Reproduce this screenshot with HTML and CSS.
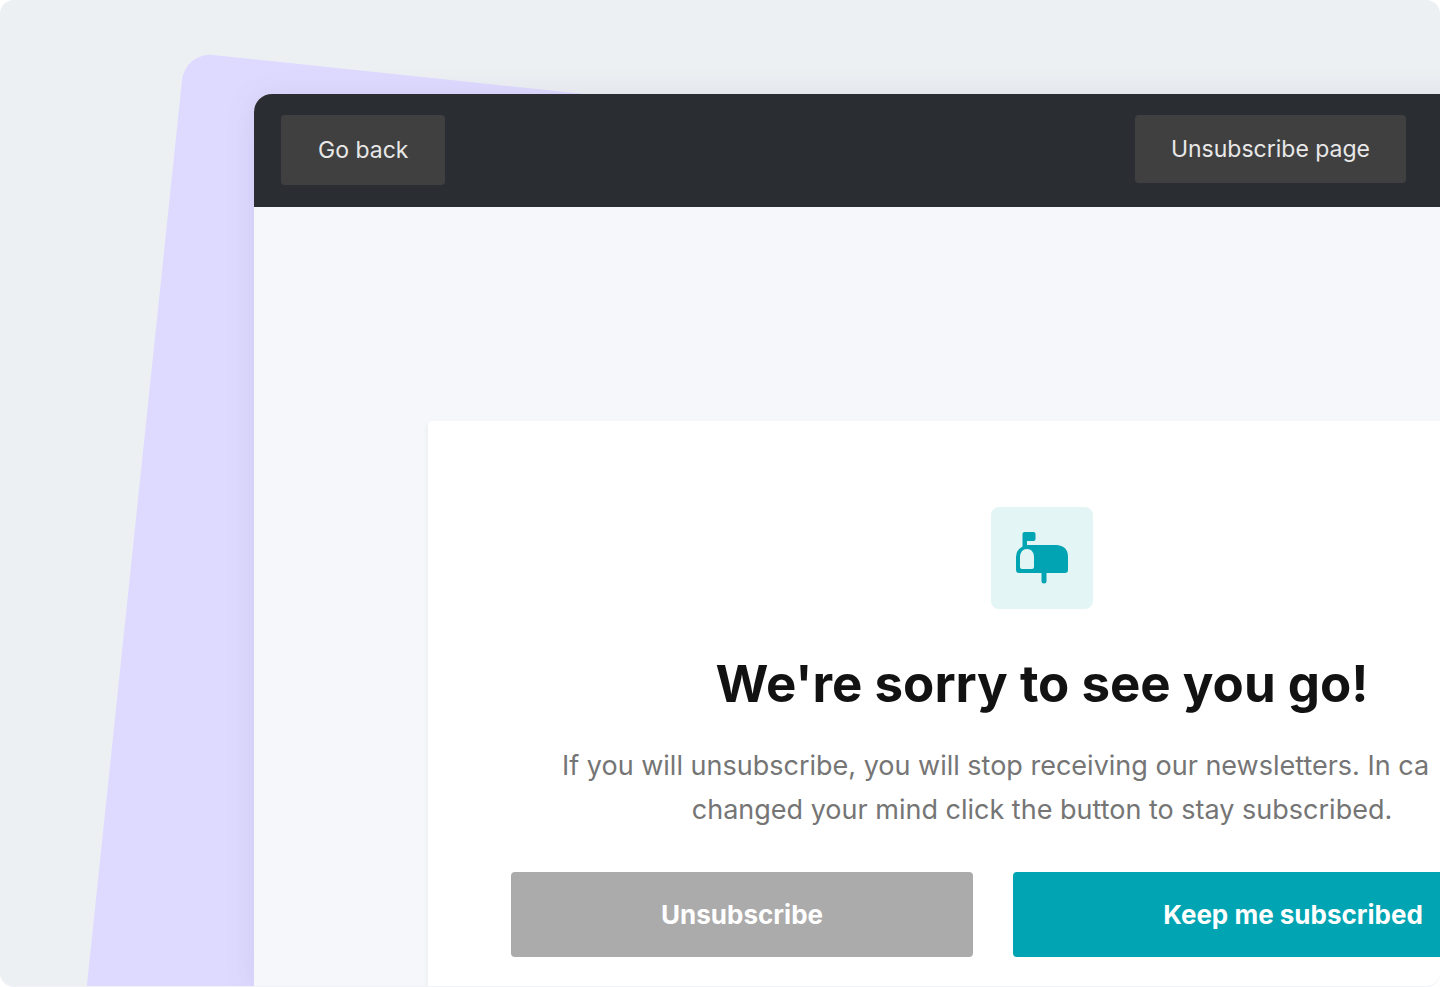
FILE: index.html
```html
<!DOCTYPE html>
<html lang="en">
<head>
    <meta charset="UTF-8">
    <meta name="viewport" content="width=device-width, initial-scale=1.0">
    <title>Unsubscribe page</title>
    <link rel="stylesheet" href="styles.css">
</head>
<body>
    <div class="stage">
        <div class="sheet"></div>
        <div class="window">
            <header class="topbar">
                <button type="button" class="bar-button">Go back</button>
                <button type="button" class="bar-button page-button">Unsubscribe page</button>
            </header>
            <main class="content">
                <section class="card">
                    <div class="icon">
                        <svg width="54" height="54" viewBox="0 0 54 54" aria-hidden="true">
                            <path fill="#00a4b2" fill-rule="evenodd" d="M7.5 3 Q7.5 1 9.500 1 H18.500 Q20.500 1 20.500 3 V8 Q20.500 10 18.500 10 H12 V14 H42 Q53 15 53 26 V39 Q53 42 50 42 H31.500 V50 Q31.500 52.500 29 52.500 Q26.500 52.500 26.500 50 V42 H4 Q1 42 1 39 V26 Q1 19 7.500 15.500 Z M5 36 Q5 38 7 38 H17 Q19 38 19 36 V26 Q18.500 18 12 18 Q5.500 18 5 26 Z"/>
                        </svg>
                    </div>
                    <h1>We're sorry to see you go!</h1>
                    <p class="message"><span class="first-line">If you will unsubscribe, you will stop receiving our newsletters. In ca</span> changed your mind click the button to stay subscribed.</p>
                    <div class="actions">
                        <button type="button" class="action">Unsubscribe</button>
                        <button type="button" class="action keep">Keep me subscribed</button>
                    </div>
                </section>
            </main>
        </div>
    </div>
</body>
</html>
```
FILE: styles.css
```css
* {
    box-sizing: border-box;
}
body {
    margin: 0;
    background-color: #fff;
    font-family: Inter, "Liberation Sans", sans-serif;
}
button {
    border: none;
    font-family: inherit;
    cursor: pointer;
}
.stage {
    position: relative;
    display: flex;
    height: 100vh;
    padding: 94px 0 0 254px;
    overflow: hidden;
    border-radius: 14px;
    border-bottom: 1px solid #f1f1f8;
    background-color: #ecf0f3;
}
/* tilted sheet behind the window */
.sheet {
    position: absolute;
    top: 52px;
    left: 185px;
    width: 100%;
    height: 120%;
    border-radius: 28px;
    background-color: #dedaff;
    transform: rotate(6deg);
    transform-origin: top left;
}
/* the window runs off the right side of the stage */
.window {
    position: relative;
    display: flex;
    flex-direction: column;
    flex: 1;
    margin-right: -390px;
    border-radius: 18px 18px 0 0;
    background-color: #f6f7fa;
    box-shadow: 0 4px 32px rgba(60, 50, 110, 0.1);
}
.topbar {
    display: flex;
    justify-content: space-between;
    align-items: flex-start;
    padding: 21px 424px 22px 27px;
    border-radius: 18px 18px 0 0;
    background-color: #2a2d32;
}
.bar-button {
    padding: 0 37px;
    border-radius: 4px;
    background-color: #404040;
    color: #e8e8e8;
    font-size: 23px;
    line-height: 70px;
}
.page-button {
    padding: 0 36px;
    line-height: 68px;
}
.content {
    flex: 1;
    padding: 214px 174px 0;
}
.card {
    display: flex;
    flex-direction: column;
    align-items: center;
    min-height: 640px;
    padding: 86px 83px 30px;
    border-radius: 4px;
    background-color: #fff;
    box-shadow: 0 4px 6px rgba(40, 60, 60, 0.08);
}
.icon {
    display: flex;
    justify-content: center;
    align-items: center;
    width: 102px;
    height: 102px;
    border-radius: 8px;
    background-color: #e4f5f6;
}
h1 {
    margin: 44px 0 29px;
    color: #121212;
    font-size: 51px;
    line-height: 62px;
}
.message {
    width: 960px;
    max-width: 100%;
    margin: 0 0 40px;
    color: #757575;
    font-size: 27px;
    line-height: 44px;
    text-align: center;
}
.first-line {
    display: block;
    text-align: left;
}
.actions {
    display: flex;
    gap: 40px;
    width: 100%;
}
.action {
    flex: 1 1 auto;
    padding: 0;
    border-radius: 4px;
    background-color: #ababab;
    color: #fff;
    font-size: 26px;
    font-weight: 700;
    line-height: 85px;
}
.keep {
    background-color: #00a4b2;
}
```
